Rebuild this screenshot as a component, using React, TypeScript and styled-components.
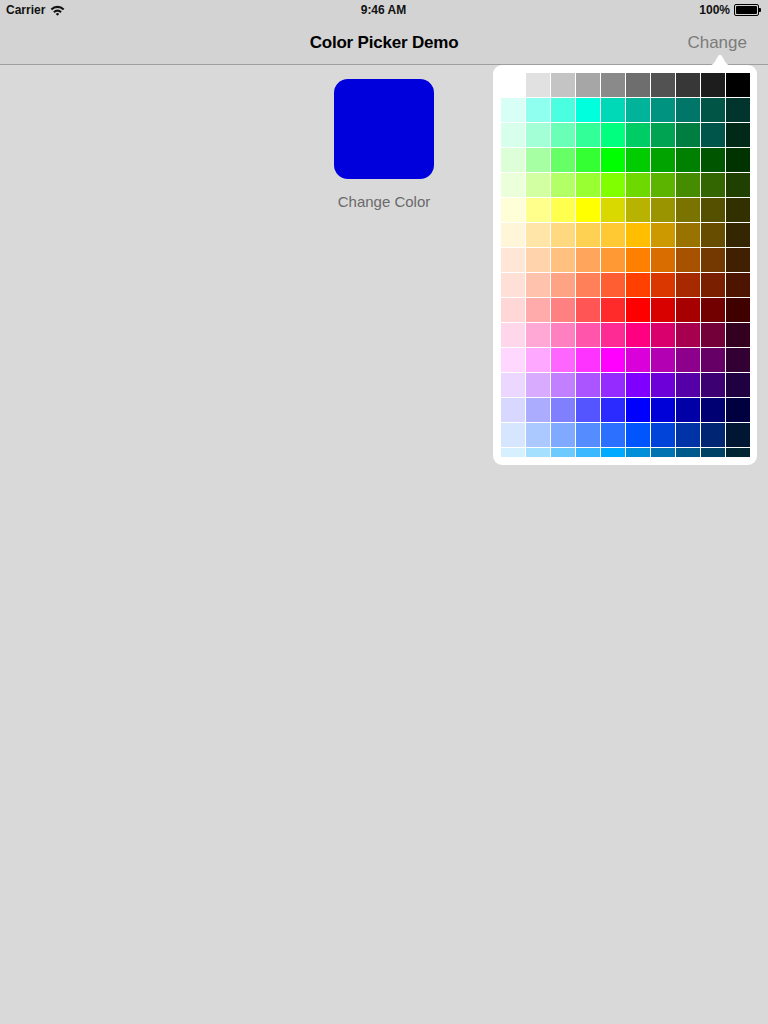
import React from "react";
import styled, { createGlobalStyle } from "styled-components";

const GlobalStyle = createGlobalStyle`
  html, body { margin: 0; padding: 0; background: #d9d9d9; }
  body { font-family: "Liberation Sans", Arial, sans-serif; }
  #root { min-height: 1024px; }
`;

const ROWS: string[][] = [
  ["#ffffff", "#e1e1e1", "#c4c4c4", "#a6a6a6", "#8a8a8a", "#6e6e6e", "#525252", "#373737", "#1d1d1d", "#000000"],
  ["#d7fff6", "#8ffff0", "#4affe0", "#00ffdc", "#00d9b8", "#00b399", "#00937f", "#007668", "#005547", "#00342c"],
  ["#d7ffeb", "#a3ffd6", "#6affb6", "#33ff99", "#00ff7f", "#00cc66", "#00a352", "#007d40", "#00554a", "#002a17"],
  ["#dcffd7", "#a6ffa3", "#66ff66", "#33ff33", "#00ff00", "#00cc00", "#00a300", "#008000", "#005500", "#003300"],
  ["#ebffda", "#d3ffa3", "#b3ff66", "#99ff33", "#80ff00", "#6dd900", "#5cb300", "#468c00", "#336600", "#1f4000"],
  ["#ffffd7", "#ffff8c", "#ffff4d", "#ffff00", "#d9d900", "#b8b300", "#999400", "#7a7300", "#555000", "#333000"],
  ["#fff5d9", "#ffe6a8", "#ffd980", "#ffd152", "#ffc933", "#ffbf00", "#cc9900", "#997300", "#664d00", "#332600"],
  ["#ffe6d7", "#ffd3ab", "#ffc080", "#ffa65c", "#ff9933", "#ff8000", "#d96d00", "#a65200", "#733900", "#402000"],
  ["#ffe0d7", "#ffc2ad", "#ffa385", "#ff8059", "#ff5e33", "#ff4000", "#d93600", "#a62900", "#7a1f00", "#4d1400"],
  ["#ffd7d7", "#ffabab", "#ff8080", "#ff5555", "#ff2b2b", "#ff0000", "#d90000", "#a60000", "#730000", "#400000"],
  ["#ffd7eb", "#ffa8d6", "#ff80c0", "#ff55aa", "#ff2b95", "#ff0080", "#d9006d", "#a6004f", "#730038", "#330020"],
  ["#ffd7ff", "#ffa8ff", "#ff66ff", "#ff33ff", "#ff00ff", "#d900d9", "#b300b3", "#8c008c", "#660066", "#330033"],
  ["#ebd7ff", "#d9abff", "#c080ff", "#aa55ff", "#952bff", "#8000ff", "#6d00d9", "#5500a6", "#3d0073", "#1f0040"],
  ["#d7d7ff", "#acacff", "#8080ff", "#5555ff", "#2b2bff", "#0000ff", "#0000d9", "#0000a6", "#000073", "#000040"],
  ["#d7e6ff", "#abc9ff", "#80aaff", "#558cff", "#2b70ff", "#0055ff", "#0044d9", "#0033a6", "#002673", "#001733"],
  ["#d7f0ff", "#a6e0ff", "#6dcaff", "#3bb8ff", "#00aaff", "#008fd9", "#0073b3", "#005a8c", "#004266", "#002633"],
];

const Page = styled.div`
  position: relative;
  width: 768px;
  height: 1024px;
  background: #d9d9d9;
  overflow: hidden;
`;

const Header = styled.header`
  background: #d3d3d3;
  border-bottom: 1px solid #9f9f9f;
`;

const StatusBar = styled.div`
  height: 20px;
  display: grid;
  grid-template-columns: 1fr auto 1fr;
  align-items: center;
  padding: 0 7px 0 6px;
  font-size: 12px;
  font-weight: bold;
  color: #111;
`;

const StatusLeft = styled.div`
  display: flex;
  align-items: center;
  gap: 5px;
`;

const StatusRight = styled.div`
  display: flex;
  align-items: center;
  justify-content: flex-end;
  gap: 4px;
`;

const Battery = styled.div`
  position: relative;
  width: 21px;
  height: 8px;
  border: 1px solid #000;
  border-radius: 2px;
  padding: 1px;
  margin-right: 2px;
  &::before {
    content: "";
    display: block;
    width: 100%;
    height: 100%;
    background: #000;
    border-radius: 1px;
  }
  &::after {
    content: "";
    position: absolute;
    right: -3px;
    top: 3px;
    width: 2px;
    height: 4px;
    background: #000;
    border-radius: 0 1px 1px 0;
  }
`;

const NavBar = styled.div`
  height: 44px;
  display: grid;
  grid-template-columns: 1fr auto 1fr;
  align-items: center;
  padding: 2px 21px 0 21px;
  box-sizing: border-box;
`;

const Title = styled.div`
  font-size: 17px;
  font-weight: bold;
  color: #000;
  letter-spacing: -0.2px;
`;

const NavButton = styled.div`
  justify-self: end;
  font-size: 17px;
  color: #7b7b7b;
`;

const Content = styled.main`
  display: flex;
  flex-direction: column;
  align-items: center;
  padding-top: 14px;
`;

const Swatch = styled.div<{ $color: string }>`
  width: 100px;
  height: 100px;
  border-radius: 14px;
  background: ${(p) => p.$color};
`;

const SwatchLabel = styled.div`
  margin-top: 14px;
  font-size: 15px;
  color: #6a6a6a;
`;

const Popover = styled.div`
  position: absolute;
  left: 493px;
  top: 65px;
  width: 264px;
  height: 400px;
  box-sizing: border-box;
  background: #fff;
  border-radius: 9px;
  padding: 8px 7px 8px 8px;
`;

const Arrow = styled.svg`
  position: absolute;
  left: 213px;
  top: -13px;
`;

const GridScroll = styled.div`
  height: 384px;
  overflow: hidden;
`;

const Grid = styled.div`
  display: grid;
  grid-template-columns: repeat(10, 24px);
  grid-auto-rows: 24px;
  gap: 1px;
`;

const Cell = styled.div<{ $color: string }>`
  background: ${(p) => p.$color};
`;

const Wifi = () => (
  <svg width="15" height="11" viewBox="0 0 15 11">
    <path d="M0.6 3.8 A9.6 9.6 0 0 1 14.4 3.8 L12.9 5.3 A7.4 7.4 0 0 0 2.1 5.3 Z" fill="#111" />
    <path d="M3.2 6.4 A6 6 0 0 1 11.8 6.4 L10.3 7.9 A3.8 3.8 0 0 0 4.7 7.9 Z" fill="#111" />
    <path d="M5.8 9 A2.3 2.3 0 0 1 9.2 9 L7.5 10.7 Z" fill="#111" />
  </svg>
);

export default function App() {
  return (
    <Page>
      <GlobalStyle />
      <Header>
        <StatusBar>
          <StatusLeft>
            <span>Carrier</span>
            <Wifi />
          </StatusLeft>
          <span>9:46 AM</span>
          <StatusRight>
            <span>100%</span>
            <Battery />
          </StatusRight>
        </StatusBar>
        <NavBar>
          <span />
          <Title>Color Picker Demo</Title>
          <NavButton>Change</NavButton>
        </NavBar>
      </Header>
      <Content>
        <Swatch $color="#0000dc" />
        <SwatchLabel>Change Color</SwatchLabel>
      </Content>
      <Popover>
        <Arrow width="28" height="14" viewBox="0 0 28 14">
          <path d="M0 14 C6 14 8 12 11 6 C13 1.5 15 1.5 17 6 C20 12 22 14 28 14 Z" fill="#fff" />
        </Arrow>
        <GridScroll>
          <Grid>
            {ROWS.flatMap((row, r) =>
              row.map((c, i) => <Cell key={`${r}-${i}`} $color={c} />)
            )}
          </Grid>
        </GridScroll>
      </Popover>
    </Page>
  );
}
